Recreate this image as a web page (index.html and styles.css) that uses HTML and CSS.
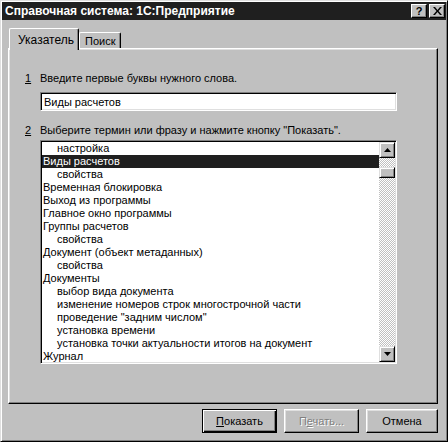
FILE: index.html
```html
<!DOCTYPE html>
<html lang="ru">
<head>
<meta charset="utf-8">
<link rel="stylesheet" href="styles.css">
</head>
<body>
<div class="window">
  <div class="titlebar">
    <span class="title">Справочная система: 1С:Предприятие</span>
    <div class="tbtns">
      <span class="tbtn q">?</span>
      <span class="tbtn"><svg width="9" height="8" viewBox="0 0 9 8"><path d="M0 0h2l2.5 3 2.5-3h2L5.5 4 9 8H7L4.5 5 2 8H0l3.5-4z" fill="#000"/></svg></span>
    </div>
  </div>
  <div class="body">
    <div class="tabs">
      <div class="tab active">Указатель</div>
      <div class="tab">Поиск</div>
    </div>
    <div class="panel">
      <div class="label"><span class="num">1</span>Введите первые буквы нужного слова.</div>
      <div class="input">Виды расчетов</div>
      <div class="label l2"><span class="num">2</span>Выберите термин или фразу и нажмите кнопку "Показать".</div>
      <div class="list">
        <div class="items">
          <div class="item sub">настройка</div>
          <div class="item sel">Виды расчетов</div>
          <div class="item sub">свойства</div>
          <div class="item">Временная блокировка</div>
          <div class="item">Выход из программы</div>
          <div class="item">Главное окно программы</div>
          <div class="item">Группы расчетов</div>
          <div class="item sub">свойства</div>
          <div class="item">Документ (объект метаданных)</div>
          <div class="item sub">свойства</div>
          <div class="item">Документы</div>
          <div class="item sub">выбор вида документа</div>
          <div class="item sub">изменение номеров строк многострочной части</div>
          <div class="item sub">проведение "задним числом"</div>
          <div class="item sub">установка времени</div>
          <div class="item sub">установка точки актуальности итогов на документ</div>
          <div class="item">Журнал</div>
        </div>
        <div class="scrollbar">
          <div class="sbtn"><svg width="7" height="4" viewBox="0 0 7 4"><path d="M3.5 0L7 4H0z" fill="#000"/></svg></div>
          <div class="track">
            <div class="thumb"></div>
          </div>
          <div class="sbtn"><svg width="7" height="4" viewBox="0 0 7 4"><path d="M0 0h7L3.5 4z" fill="#000"/></svg></div>
        </div>
      </div>
    </div>
    <div class="buttons">
      <div class="btn default"><span class="inner"><u>П</u>оказать</span></div>
      <div class="btn disabled"><span class="inner">П<u>е</u>чать...</span></div>
      <div class="btn cancel"><span class="inner">Отмена</span></div>
    </div>
  </div>
</div>
</body>
</html>
```

FILE: styles.css
```css
html, body {
  margin: 0;
  padding: 0;
  background: #c0c0c0;
}
body {
  font-family: "Liberation Sans", Arial, sans-serif;
  font-size: 11px;
  color: #000;
}
.window {
  width: 448px;
  height: 442px;
  box-sizing: border-box;
  background: #c0c0c0;
  border: 1px solid;
  border-color: #dfdfdf #000 #000 #dfdfdf;
  box-shadow: inset 1px 1px #fff, inset -1px -1px #808080;
  padding: 1px;
  display: flex;
  flex-direction: column;
}
.titlebar {
  height: 18px;
  background: #1f1f1f;
  color: #fff;
  display: flex;
  align-items: center;
  justify-content: space-between;
  padding: 0 1px 0 3px;
}
.title {
  font-weight: bold;
  font-size: 12px;
  letter-spacing: 0;
}
.tbtns {
  display: flex;
  gap: 2px;
}
.tbtn {
  width: 16px;
  height: 14px;
  box-sizing: border-box;
  background: #c0c0c0;
  border: 1px solid;
  border-color: #fff #000 #000 #fff;
  box-shadow: inset -1px -1px #808080;
  color: #000;
  font-weight: bold;
  font-size: 11px;
  display: flex;
  align-items: center;
  justify-content: center;
  line-height: 1;
}
.body {
  flex: 1;
  display: flex;
  flex-direction: column;
  padding: 8px 8px 0 6px;
}
.tabs {
  display: flex;
  align-items: flex-end;
  height: 20px;
  padding-left: 1px;
}
.tab {
  box-sizing: border-box;
  height: 16px;
  padding: 0 5px;
  border: 1px solid;
  border-bottom: none;
  border-color: #fff #000 #000 #fff;
  box-shadow: inset -1px 0 #808080;
  border-radius: 2px 2px 0 0;
  display: flex;
  align-items: center;
  font-size: 11px;
}
.tab.active {
  height: 22px;
  margin-bottom: -2px;
  padding: 0 7px 0 8px;
  position: relative;
  z-index: 1;
  background: #c0c0c0;
  width: 70px;
  font-size: 12px;
}
.panel {
  height: 356px;
  box-sizing: border-box;
  border: 1px solid;
  border-color: #fff #000 #000 #fff;
  box-shadow: inset -1px -1px #808080, inset 1px 1px #dfdfdf;
  padding: 23px 0 0 16px;
  display: flex;
  flex-direction: column;
}
.label {
  height: 13px;
  line-height: 13px;
  display: flex;
  white-space: nowrap;
}
.num {
  width: 15px;
  text-decoration: underline;
}
.input {
  margin: 7px 0 0 15px;
  width: 357px;
  height: 19px;
  box-sizing: border-box;
  background: #fff;
  border: 1px solid;
  border-color: #808080 #fff #fff #808080;
  box-shadow: inset 1px 1px #000, inset -1px -1px #dfdfdf;
  padding: 2px 0 0 3px;
  line-height: 14px;
}
.l2 {
  margin-top: 13px;
}
.list {
  margin: 3px 0 0 15px;
  width: 357px;
  height: 224px;
  box-sizing: border-box;
  background: #fff;
  border: 1px solid;
  border-color: #808080 #fff #fff #808080;
  box-shadow: inset 1px 1px #000, inset -1px -1px #dfdfdf;
  padding: 1px;
  display: flex;
}
.items {
  flex: 1;
  overflow: hidden;
}
.item {
  height: 13px;
  line-height: 13px;
  padding-left: 1px;
  white-space: nowrap;
}
.item.sub {
  padding-left: 15px;
}
.item.sel {
  background: #1f1f1f;
  color: #fff;
}
.scrollbar {
  width: 16px;
  display: flex;
  flex-direction: column;
}
.sbtn, .thumb {
  height: 16px;
  box-sizing: border-box;
  background: #c0c0c0;
  border: 1px solid;
  border-color: #dfdfdf #000 #000 #dfdfdf;
  box-shadow: inset 1px 1px #fff, inset -1px -1px #808080;
  display: flex;
  align-items: center;
  justify-content: center;
}
.track {
  flex: 1;
  background: repeating-conic-gradient(#fff 0 25%, #c0c0c0 0 50%) 0 0 / 2px 2px;
  padding-top: 9px;
}
.thumb {
  height: 11px;
}
.buttons {
  display: flex;
  justify-content: flex-end;
  gap: 7px;
  margin-top: 5px;
  padding-right: 0;
}
.btn {
  width: 75px;
  height: 24px;
  box-sizing: border-box;
  background: #c0c0c0;
  border: 1px solid;
  border-color: #fff #000 #000 #fff;
  box-shadow: inset -1px -1px #808080, inset 1px 1px #dfdfdf;
  display: flex;
  align-items: center;
  justify-content: center;
  font-size: 11px;
}
.btn.default {
  border: 1px solid #000;
  box-shadow: inset 1px 1px #fff, inset -1px -1px #000, inset -2px -2px #808080;
}
.btn.cancel {
  width: 72px;
}
.btn.disabled {
  color: #808080;
  text-shadow: 1px 1px #fff;
}
```
